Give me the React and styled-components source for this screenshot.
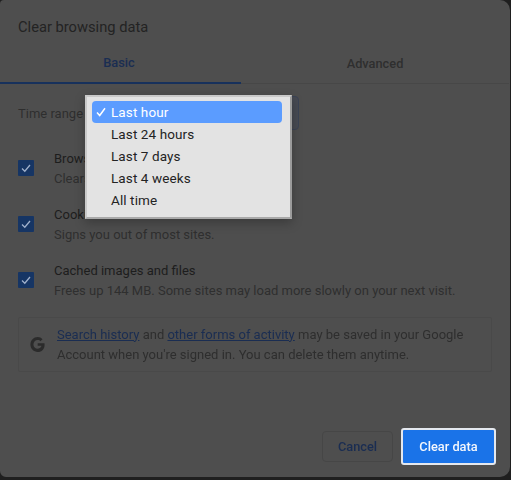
import React from 'react';
import styled, { createGlobalStyle } from 'styled-components';

const Global = createGlobalStyle`
  html, body { margin: 0; padding: 0; background: #1f1f1f; }
  #root { width: 511px; height: 480px; overflow: hidden; }
  * { box-sizing: border-box; }
`;

const Dialog = styled.div`
  position: relative;
  width: 510px;
  height: 477px;
  background: #4e4e4e;
  border-radius: 4px 10px 10px 6px;
  font-family: Roboto, "Liberation Sans", sans-serif;
  color: #1f1f1f;
  display: flex;
  flex-direction: column;
  filter: blur(0.35px);
`;
const Title = styled.h1`
  margin: 0;
  padding: 18px 18px 0;
  height: 41px;
  font-size: 14.7px;
  line-height: 18px;
  font-weight: 400;
  color: #232323;
`;
const Tabs = styled.div`
  display: flex;
  height: 43px;
  border-bottom: 1px solid #474747;
  margin-right: 1px;
`;
const Tab = styled.div`
  flex: ${p => (p.$active ? '0 0 241px' : '1 1 auto')};
  display: flex;
  align-items: center;
  justify-content: center;
  font-size: 12.8px;
  font-weight: 500;
  padding: 2px ${p => (p.$active ? '3px' : '0')} 0 0;
  color: ${p => (p.$active ? '#1a2d52' : '#2f2f2f')};
  border-bottom: ${p => (p.$active ? '2px solid #17315c' : '0')};
  margin-bottom: ${p => (p.$active ? '-1px' : '0')};
`;
const RangeRow = styled.div`
  display: flex;
  align-items: center;
  padding: 12px 0 0 18px;
  height: 46px;
`;
const RangeLabel = styled.span`
  font-size: 13px;
  color: #2e2e2e;
`;
const SelectStub = styled.div`
  margin-left: 30px;
  width: 186px;
  height: 34px;
  border: 1px solid #3b4354;
  border-radius: 4px;
  background: #474a52;
`;
const Rows = styled.div`
  display: flex;
  flex-direction: column;
  padding: 19px 18px 0;
  gap: 17px;
`;
const Row = styled.div`
  display: flex;
  align-items: center;
  gap: 20px;
  height: 39px;
`;
const Check = styled.div`
  flex: none;
  width: 16px;
  height: 16px;
  margin-bottom: 2px;
  border-radius: 1px;
  background: #163564;
  display: flex;
  align-items: center;
  justify-content: center;
`;
const RowText = styled.div`
  display: flex;
  flex-direction: column;
  gap: 3px;
  white-space: nowrap;
`;
const RowTitle = styled.div`
  font-size: 13px;
  line-height: 17px;
  color: #1d1d1d;
`;
const RowSub = styled.div`
  font-size: 13px;
  line-height: 17px;
  color: #2f2f2f;
`;
const Notice = styled.div`
  display: flex;
  align-items: center;
  gap: 11px;
  height: 55px;
  margin: 17px 18px 0;
  padding: 0 10px;
  border: 1px solid #494949;
  border-radius: 2px;
`;
const NoticeText = styled.div`
  font-size: 13px;
  line-height: 20px;
  color: #2e2e2e;
  white-space: nowrap;
`;
const Link = styled.a`
  color: #1a2d52;
  text-decoration: underline;
`;
const Actions = styled.div`
  margin-top: auto;
  display: flex;
  justify-content: flex-end;
  align-items: center;
  gap: 8px;
  padding: 0 14px 12px 0;
`;
const Cancel = styled.button`
  width: 71px;
  height: 31px;
  background: transparent;
  border: 1px solid #464646;
  border-radius: 4px;
  font: 500 12.8px Roboto, sans-serif;
  color: #1a2d52;
`;
const Primary = styled.button`
  width: 95px;
  height: 37px;
  background: #1a73e8;
  border: 2px solid #e4e8ee;
  border-radius: 3px;
  font: 500 12.8px Roboto, sans-serif;
  color: #f4f7fc;
`;
const Menu = styled.div`
  position: absolute;
  left: 85px;
  top: 95px;
  width: 207px;
  height: 124px;
  background: #e3e3e3;
  border: 2px solid #c9c9c9;
  border-right-color: #9b9b9b;
  border-bottom-color: #a9a9a9;
  box-shadow: 0 4px 10px rgba(0,0,0,.25);
  padding: 4px 8px 0 5px;
  font-size: 13.5px;
  letter-spacing: 0.1px;
  color: #232323;
`;
const MenuItem = styled.div`
  height: 22px;
  display: flex;
  align-items: center;
  padding-left: 19px;
  position: relative;
  border-radius: 4px;
  background: ${p => (p.$selected ? '#5b9cff' : 'transparent')};
  color: ${p => (p.$selected ? '#fff' : '#232323')};
`;
const Tick = styled.svg`
  position: absolute;
  left: 4px;
  top: 6px;
`;
const GMark = styled.svg`
  flex: none;
`;

const CheckBox = () => (
  <Check>
    <svg width="12" height="12" viewBox="0 0 12 12" fill="none">
      <path d="M2 6.5 L4.8 9.2 L10 3" stroke="#9fb0cb" strokeWidth="1.3" />
    </svg>
  </Check>
);

const GoogleG = () => (
  <GMark width="17" height="17" viewBox="0 0 48 48">
    <path
      fill="#2b2b2b"
      d="M24.5 20.2v7.6h10.9c-.5 2.800-3.500 8.200-10.900 8.200-6.600 0-12-5.500-12-12.200s5.400-12.200 12-12.200c3.700 0 6.300 1.600 7.800 3l5.900-5.700C34.400 5.300 29.900 3 24.500 3 13.300 3 4 12.400 4 24s9.300 21 20.500 21C36.200 45 44 36.800 44 25.200c0-1.900-.200-3.400-.400-5z"
    />
  </GMark>
);

export default function App() {
  return (
    <>
      <Global />
      <Dialog>
        <Title>Clear browsing data</Title>
        <Tabs>
          <Tab $active>Basic</Tab>
          <Tab>Advanced</Tab>
        </Tabs>
        <RangeRow>
          <RangeLabel>Time range</RangeLabel>
          <SelectStub />
        </RangeRow>
        <Rows>
          <Row>
            <CheckBox />
            <RowText>
              <RowTitle>Browsing history</RowTitle>
              <RowSub>Clears history, including in the search box</RowSub>
            </RowText>
          </Row>
          <Row>
            <CheckBox />
            <RowText>
              <RowTitle>Cookies and other site data</RowTitle>
              <RowSub>Signs you out of most sites.</RowSub>
            </RowText>
          </Row>
          <Row>
            <CheckBox />
            <RowText>
              <RowTitle>Cached images and files</RowTitle>
              <RowSub>Frees up 144 MB. Some sites may load more slowly on your next visit.</RowSub>
            </RowText>
          </Row>
        </Rows>
        <Notice>
          <GoogleG />
          <NoticeText>
            <Link>Search history</Link> and <Link>other forms of activity</Link> may be saved in your Google
            <br />
            Account when you're signed in. You can delete them anytime.
          </NoticeText>
        </Notice>
        <Actions>
          <Cancel>Cancel</Cancel>
          <Primary>Clear data</Primary>
        </Actions>
        <Menu>
          <MenuItem $selected>
            <Tick width="10" height="10" viewBox="0 0 10 10" fill="none">
              <path d="M1 5.500 L3.700 8.500 L9 1.200" stroke="#fff" strokeWidth="1.500" />
            </Tick>
            Last hour
          </MenuItem>
          <MenuItem>Last 24 hours</MenuItem>
          <MenuItem>Last 7 days</MenuItem>
          <MenuItem>Last 4 weeks</MenuItem>
          <MenuItem>All time</MenuItem>
        </Menu>
      </Dialog>
    </>
  );
}
